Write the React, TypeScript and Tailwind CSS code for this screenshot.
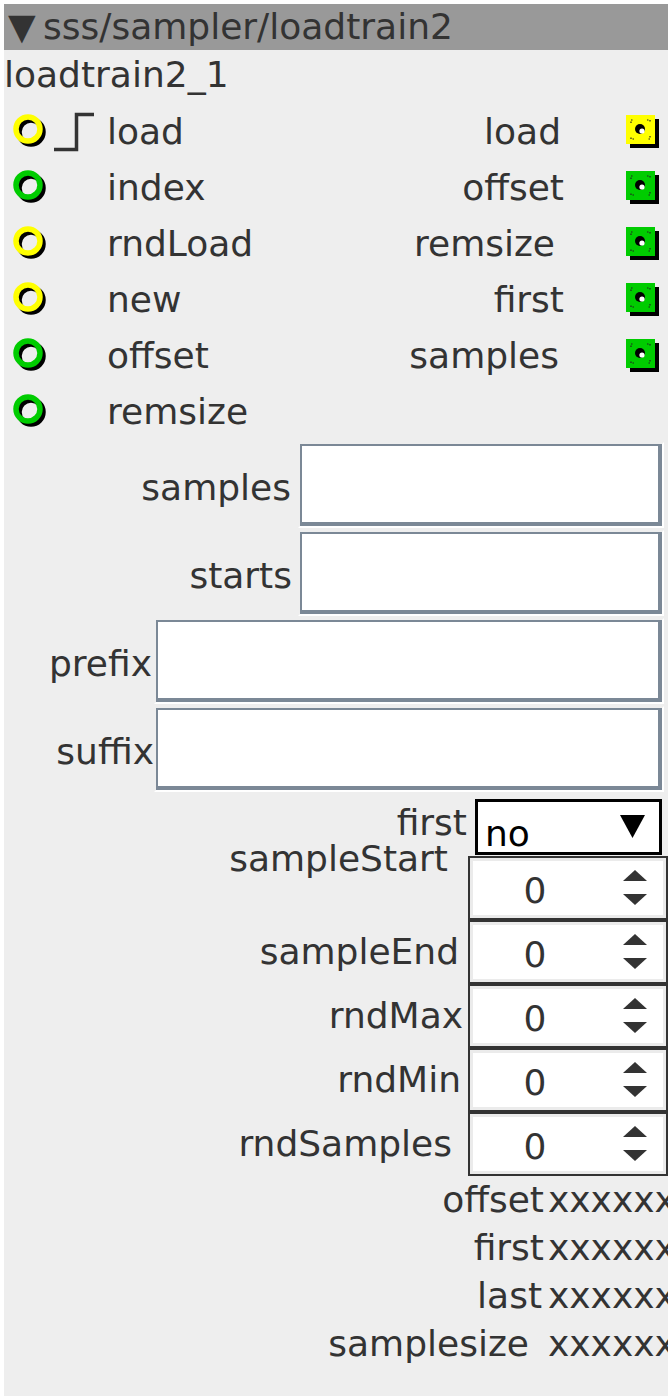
const YELLOW = "#ffff00";
const GREEN = "#00cc00";

function Inlet({ color }: { color: string }) {
  return (
    <svg width="36" height="36" viewBox="0 0 36 36" className="shrink-0">
      <circle cx="18" cy="18" r="12" fill="none" stroke="#000" strokeWidth="5.5" />
      <circle cx="15" cy="15" r="12" fill="none" stroke={color} strokeWidth="5.5" />
    </svg>
  );
}

function Outlet({ color }: { color: string }) {
  return (
    <svg width="34" height="34" viewBox="0 0 34 34" className="shrink-0">
      <rect x="4" y="4" width="29" height="29" fill="#000" />
      <rect x="0" y="0" width="29" height="29" fill={color} />
      <path
        d="M5 8V5h3M21 5h3v3M24 21v3h-3M8 24H5v-3"
        fill="none"
        stroke="#222"
        strokeWidth="1.2"
        strokeDasharray="1.5 1.5"
      />
      <circle cx="14" cy="14" r="5" fill="#000" />
      <circle cx="16" cy="16" r="2.6" fill="#fff" />
    </svg>
  );
}

function StepIcon() {
  return (
    <svg width="40" height="40" viewBox="0 0 40 40" className="ml-[5px] shrink-0">
      <path d="M0 37.5H22.5V2.5H40" fill="none" stroke="#333" strokeWidth="3.5" />
    </svg>
  );
}

const ports = [
  { left: "load", lc: YELLOW, step: true, right: "load", rc: YELLOW, gap: "mr-[65px]" },
  { left: "index", lc: GREEN, right: "offset", rc: GREEN, gap: "mr-[62px]" },
  { left: "rndLoad", lc: YELLOW, right: "remsize", rc: GREEN, gap: "mr-[71px]" },
  { left: "new", lc: YELLOW, right: "first", rc: GREEN, gap: "mr-[62px]" },
  { left: "offset", lc: GREEN, right: "samples", rc: GREEN, gap: "mr-[67px]" },
  { left: "remsize", lc: GREEN },
];

const fields = [
  { label: "samples", gap: "mr-[7px]", width: "w-[366px]" },
  { label: "starts", gap: "mr-[6px]", width: "w-[366px]" },
  { label: "prefix", gap: "mr-[2px]", width: "w-[510px]" },
  { label: "suffix", gap: "mr-0", width: "w-[510px]" },
];

const spins = [
  { label: "sampleEnd", gap: "mr-[9px]" },
  { label: "rndMax", gap: "mr-[5px]" },
  { label: "rndMin", gap: "mr-[7px]" },
  { label: "rndSamples", gap: "mr-[16px]" },
];

const infos = [
  { label: "offset", pad: "pr-0" },
  { label: "first", pad: "pr-0" },
  { label: "last", pad: "pr-[2px]" },
  { label: "samplesize", pad: "pr-[15px]" },
];

function SpinBox() {
  return (
    <div className="h-16 w-[200px] shrink-0 border-2 border-[#333333]">
      <div className="flex h-full items-center border-[3px] border-[#ebebeb] bg-white">
        <span className="mt-[5px] w-[124px] text-center">0</span>
        <svg width="26" height="36" viewBox="0 0 26 36" className="ml-[25px]">
          <polygon points="13,0 25,11 1,11" fill="#333" />
          <polygon points="1,24 25,24 13,35" fill="#333" />
        </svg>
      </div>
    </div>
  );
}

export default function App() {
  return (
    <div className="min-h-[1400px] bg-white p-1">
      <div className="h-[1392px] w-[664px] overflow-hidden bg-[#eeeeee] font-['DejaVu_Sans',sans-serif] text-[36px] leading-none text-[#333333]">
        {/* header */}
        <div className="flex h-[46px] items-center whitespace-nowrap bg-[#999999] pl-[4px]">
          <span className="w-[35px]">▼</span>
          <span>sss/sampler/loadtrain2</span>
        </div>
        <div className="h-[54px] pt-[7px]">loadtrain2_1</div>

        {/* ports */}
        {ports.map((p, i) => (
          <div key={i} className="flex h-14 items-center">
            <div className="flex w-[103px] shrink-0 items-center pl-[9px]">
              <Inlet color={p.lc} />
              {p.step && <StepIcon />}
            </div>
            <div className="flex-1">{p.left}</div>
            {p.right && (
              <>
                <div className={`text-right ${p.gap}`}>{p.right}</div>
                <div className="mr-[8px]">
                  <Outlet color={p.rc!} />
                </div>
              </>
            )}
          </div>
        ))}

        {/* text fields */}
        <div className="mt-[2px] flex flex-col gap-[2px] pr-[4px]">
          {fields.map((f) => (
            <div key={f.label} className="flex items-center justify-end">
              <div className={`mt-[5px] ${f.gap}`}>{f.label}</div>
              <div
                className={`h-[86px] ${f.width} border-2 border-t-[#eeeeee] border-r-white border-b-white border-l-[#eeeeee]`}
              >
                <div className="h-full border-t-2 border-r-4 border-b-4 border-l-2 border-[#7b8896] bg-white" />
              </div>
            </div>
          ))}
        </div>

        {/* dropdown */}
        <div className="flex items-start justify-end pt-[7px] pb-[1px]">
          <div className="mt-[6px] mr-[8px]">first</div>
          <div className="mr-[6px] flex h-14 w-[187px] shrink-0 items-end justify-between border-[3px] border-black bg-white pl-[7px] pr-[14px] text-black">
            <span>no</span>
            <svg width="25" height="23" viewBox="0 0 25 23" className="mt-[13px] self-start">
              <polygon points="0,0 25,0 12.5,23" fill="#000" />
            </svg>
          </div>
        </div>

        {/* spin boxes */}
        <div className="flex items-start justify-end">
          <div className="-mt-[15px] mr-[20px]">sampleStart</div>
          <SpinBox />
        </div>
        {spins.map((s) => (
          <div key={s.label} className="flex h-16 items-center justify-end">
            <div className={s.gap}>{s.label}</div>
            <SpinBox />
          </div>
        ))}

        {/* info rows */}
        {infos.map((r) => (
          <div key={r.label} className="flex h-12 items-center whitespace-nowrap">
            <div className={`w-[540px] shrink-0 text-right ${r.pad}`}>{r.label}</div>
            <div className="ml-[4px]">xxxxxxxx</div>
          </div>
        ))}
      </div>
    </div>
  );
}
